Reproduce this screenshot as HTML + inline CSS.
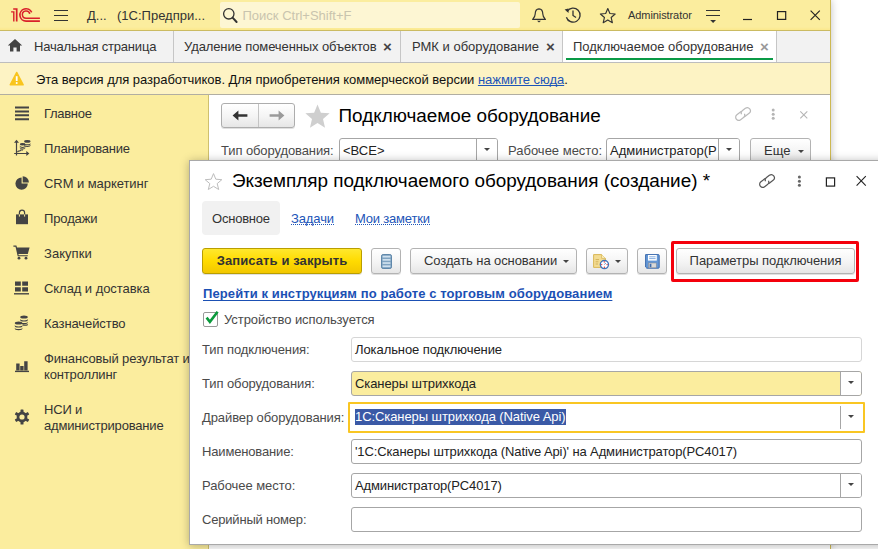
<!DOCTYPE html>
<html lang="ru">
<head>
<meta charset="utf-8">
<title>1С:Предприятие</title>
<style>
*{box-sizing:border-box;margin:0;padding:0}
html,body{width:878px;height:549px;overflow:hidden;background:#fff}
body{font-family:"Liberation Sans",sans-serif;font-size:13px;color:#333;position:relative}
.abs{position:absolute}
.t{position:absolute;white-space:nowrap;line-height:16px}
#win{position:absolute;left:0;top:0;width:831px;height:549px;overflow:hidden;background:#fff;box-shadow:0 0 8px rgba(0,0,0,.25)}
#titlebar{position:absolute;left:0;top:0;width:831px;height:31px;background:linear-gradient(#fbed9e 0,#fbed9e 27px,#fbe88c 30px);border-bottom:1px solid #cbbb62}
#search{position:absolute;left:220px;top:2px;width:300px;height:26px;background:#fdf6d3;border-radius:2px}
#tabs{position:absolute;left:0;top:31px;width:831px;height:31px;background:#f2f2f2;border-right:1px solid #d8c45f}
#tabs .sep{position:absolute;top:0;width:1px;height:31px;background:#c6c6c6}
#tabline{position:absolute;left:0;top:62px;width:831px;height:1px;background:#bdbdbd}
#notify{position:absolute;left:0;top:63px;width:831px;height:31px;background:#fdf3c4;border-right:1px solid #d8c45f}
#notifyline{position:absolute;left:0;top:94px;width:831px;height:1px;background:#b1aea2}
#side{position:absolute;left:0;top:95px;width:208px;height:454px;background:#fbed9e}
#sideline{position:absolute;left:208px;top:95px;width:1px;height:454px;background:#cfc06e}
#content{position:absolute;left:209px;top:95px;width:621px;height:454px;background:#fff}
#winright{position:absolute;left:830px;top:0;width:1px;height:549px;background:#cdb852}
.side-item{position:absolute;left:44px;white-space:nowrap;line-height:16px;font-size:13px;color:#333}
.ico{position:absolute}
a.lnk{color:#1c55b8;text-decoration:underline;text-decoration-skip-ink:none}
.btn{position:absolute;height:25px;border:1px solid #b3b3b3;border-radius:3px;background:linear-gradient(#ffffff,#f4f4f4 55%,#e6e6e6);box-shadow:0 1px 0 rgba(0,0,0,.12);font-size:13px;color:#333;line-height:23px;text-align:center;white-space:nowrap}
.fld{position:absolute;height:25px;border:1px solid #a6a6a6;border-radius:3px;background:#fff;font-size:13px;line-height:23px;color:#222;white-space:nowrap;overflow:hidden;padding-left:3px}
.fld .dd{position:absolute;right:0;top:0;width:21px;height:100%;border-left:1px solid #a6a6a6;background:#fff}
.fld .dd:after{content:"";position:absolute;left:7px;top:9px;border:3px solid transparent;border-top:3px solid #444;border-bottom:0}
#dlg{position:absolute;left:189px;top:160px;width:700px;height:385px;background:#fff;border:1px solid #a9a9a9;box-shadow:0 1px 9px rgba(0,0,0,.28)}
.lbl{position:absolute;white-space:nowrap;font-size:13px;line-height:16px;color:#4a4a4a}
.x{font-size:15px;font-weight:bold;color:#444;line-height:16px}
.car{position:absolute;top:11px;border:3px solid transparent;border-top:3px solid #444;border-bottom:0}
.dl{color:#1c55b8;border-bottom:1px dotted #1c55b8;line-height:11px}
.btn.y{background:linear-gradient(#ffe82e,#ffdb00 50%,#f2c700);border-color:#b99e00;font-weight:bold;color:#333}
</style>
</head>
<body>
<div id="win">
  <div id="titlebar">
    <svg class="ico" style="left:10px;top:7px" width="31" height="16" viewBox="0 0 31 16">
      <g fill="none" stroke="#d9202b">
        <path d="M3.2 2 H6.7 V14.6" stroke-width="1.7"/>
        <path d="M1.1 4.9 H3.8 V14.6" stroke-width="1.4"/>
        <path d="M21.67 5.35 A6.15 6.15 0 1 0 16.1 14.1 H29.9" stroke-width="1.6"/>
        <path d="M19.74 6.96 A3.7 3.7 0 1 0 16.1 11.3 H29.9" stroke-width="1.5"/>
      </g>
    </svg>
    <svg class="ico" style="left:54px;top:9px" width="16" height="13" viewBox="0 0 16 13"><g stroke="#333" stroke-width="1.2"><path d="M0 1.5H14M0 6.5H14M0 11.5H14"/></g></svg>
    <div class="t" style="left:87px;top:8px;color:#333">Д...</div>
    <div class="t" style="left:117px;top:8px;color:#333">(1С:Предпри...</div>
    <div id="search"></div>
    <svg class="ico" style="left:222px;top:6px" width="18" height="18" viewBox="0 0 18 18"><circle cx="6.8" cy="7.8" r="5.2" fill="none" stroke="#333" stroke-width="1.3"/><path d="M10.8 11.9 L14.6 16" stroke="#333" stroke-width="2" stroke-linecap="round"/></svg>
    <div class="t" style="left:242.5px;top:8px;color:#c9c4ae">Поиск Ctrl+Shift+F</div>
    <!-- bell -->
    <svg class="ico" style="left:530px;top:7px" width="18" height="17" viewBox="0 0 18 17"><path d="M9 1.8 C6.2 2 5.2 4.4 5.2 7 C5.2 9.6 4 10.8 2.6 12.4 H15.4 C14 10.8 12.8 9.6 12.8 7 C12.8 4.4 11.8 2 9 1.8 Z" fill="none" stroke="#333" stroke-width="1.2" stroke-linejoin="round"/><path d="M7 13.8 H11 L9 15.6 Z" fill="#333"/></svg>
    <!-- history -->
    <svg class="ico" style="left:563px;top:5px" width="20" height="20" viewBox="0 0 20 20"><path d="M4.2 6.4 A7 7 0 1 1 3.4 12.2" fill="none" stroke="#333" stroke-width="1.3"/><path d="M1.6 4.6 L5.4 3.6 L5.6 8 Z" fill="#333"/><path d="M10 5.6 V10.4 L13 12.6" fill="none" stroke="#333" stroke-width="1.3"/></svg>
    <!-- star -->
    <svg class="ico" style="left:598.5px;top:6.6px" width="17.6" height="17.6" viewBox="0 0 20 20"><path d="M10 1.8 L12.4 7.4 L18.4 7.9 L13.8 11.9 L15.2 17.8 L10 14.7 L4.8 17.8 L6.2 11.9 L1.6 7.9 L7.6 7.4 Z" fill="none" stroke="#333" stroke-width="1.3" stroke-linejoin="round"/></svg>
    <div class="t" style="left:628px;top:8px;font-size:11px;color:#333;line-height:14px;letter-spacing:-0.08px">Administrator</div>
    <!-- filter menu -->
    <svg class="ico" style="left:706px;top:8px" width="16" height="16" viewBox="0 0 16 16"><path d="M0 2.5H14M0 7.5H14" stroke="#333" stroke-width="1.2"/><path d="M4.2 12 H10 L7.1 14.9 Z" fill="#333"/></svg>
    <!-- window controls -->
    <svg class="ico" style="left:742px;top:8px" width="12" height="14" viewBox="0 0 12 14"><path d="M1 11.5H10" stroke="#222" stroke-width="1.2"/></svg>
    <svg class="ico" style="left:776px;top:9px" width="12" height="12" viewBox="0 0 12 12"><rect x="1.5" y="2.6" width="8.2" height="7.8" fill="none" stroke="#222" stroke-width="1.2"/></svg>
    <svg class="ico" style="left:808px;top:8px" width="14" height="14" viewBox="0 0 14 14"><path d="M2.6 2.6 L11.8 11.8 M11.8 2.6 L2.6 11.8" stroke="#222" stroke-width="1.15"/></svg>
  </div>
  <div id="tabs">
    <svg class="ico" style="left:7px;top:7px" width="16" height="15" viewBox="0 0 16 15"><path d="M8 1 L15.2 7.6 H13 V13.6 H9.6 V9.4 H6.4 V13.6 H3 V7.6 H0.8 Z" fill="#444"/></svg>
    <div class="t" style="left:34px;top:8px;color:#333;letter-spacing:-0.2px">Начальная страница</div>
    <div class="sep" style="left:173px"></div>
    <div class="t" style="left:184px;top:8px;color:#333;letter-spacing:-0.1px">Удаление помеченных объектов</div>
    <div class="t x" style="left:383px;top:8px">×</div>
    <div class="sep" style="left:400px"></div>
    <div class="t" style="left:412px;top:8px;color:#333">РМК и оборудование</div>
    <div class="t x" style="left:546px;top:8px">×</div>
    <div class="sep" style="left:562px"></div>
    <div class="abs" style="left:563px;top:0;width:213px;height:32px;background:#fff"></div>
    <div class="abs" style="left:566px;top:27px;width:207px;height:2px;background:#0a9a46"></div>
    <div class="t" style="left:573px;top:8px;color:#333">Подключаемое оборудование</div>
    <div class="t x" style="left:760px;top:8px;color:#999">×</div>
    <div class="sep" style="left:776px"></div>
  </div>
  <div id="tabline"></div>
  <div id="notify">
    <svg class="ico" style="left:9px;top:8px" width="16" height="15" viewBox="0 0 16 15"><path d="M7.7 1.4 L14.2 13.8 H1.2 Z" fill="#f9c51d" stroke="#f9c51d" stroke-width="1.4" stroke-linejoin="round"/><path d="M7.7 5.2 V10" stroke="#fff" stroke-width="1.8"/><circle cx="7.7" cy="12" r="1" fill="#fff"/></svg>
    <div class="t" style="left:36px;top:9px;color:#111;letter-spacing:-0.04px">Эта версия для разработчиков. Для приобретения коммерческой версии <a class="lnk">нажмите сюда</a>.</div>
  </div>
  <div id="notifyline"></div>
  <div id="side">
    <!-- y offsets relative to side top (95) -->
    <svg class="ico" style="left:15px;top:11px" width="14" height="15" viewBox="0 0 14 15"><path d="M0 1.5H14M0 5.4H14M0 9.3H14M0 13.2H14" stroke="#444" stroke-width="2"/></svg>
    <div class="side-item" style="top:11px;letter-spacing:-0.3px">Главное</div>

    <svg class="ico" style="left:13px;top:43px" width="18" height="19" viewBox="0 0 18 19"><g stroke="#444" fill="none"><path d="M3.5 3.5 V17.6 M1.2 15.5 H14.5" stroke-width="1.2"/><path d="M4.4 14 L5.6 13 H6.8 L7.8 12 H10" stroke-width="1.2"/></g><g fill="#444"><path d="M3.5 1.8 L1 4.8 H6 Z M16.4 15.5 L13.3 13 V18 Z"/><ellipse cx="9.6" cy="6.3" rx="2.8" ry="1.3"/><path d="M6.80 7.6 A2.8 1.3 0 0 0 12.40 7.6 V8.60 A2.8 1.3 0 0 1 6.80 8.60 Z"/><path d="M6.80 9.3 A2.8 1.3 0 0 0 12.40 9.3 V10.10 A2.8 1.3 0 0 1 6.80 10.10 Z"/><ellipse cx="14.3" cy="3.4" rx="3.2" ry="1.4"/><path d="M11.10 4.9 A3.2 1.4 0 0 0 17.50 4.9 V5.90 A3.2 1.4 0 0 1 11.10 5.90 Z"/><path d="M11.10 6.6 A3.2 1.4 0 0 0 17.50 6.6 V7.60 A3.2 1.4 0 0 1 11.10 7.60 Z"/></g></svg>
    <div class="side-item" style="top:46px;letter-spacing:-0.26px">Планирование</div>

    <svg class="ico" style="left:15px;top:81px" width="15" height="15" viewBox="0 0 15 15"><path d="M6.6 1.4 A6.2 6.2 0 1 0 12.8 7.6 H6.6 Z" fill="#444"/><path d="M7.7 0.3 A6.2 6.2 0 0 1 13.9 6.5 H7.7 Z" fill="#444"/></svg>
    <div class="side-item" style="top:81px;letter-spacing:-0.06px">CRM и маркетинг</div>

    <svg class="ico" style="left:15px;top:114px" width="14" height="16" viewBox="0 0 14 16"><path d="M1 5.4 H13 V15.2 H1 Z" fill="#444"/><path d="M4.4 7.2 V3.8 A2.6 2.6 0 0 1 9.6 3.8 V7.2" fill="none" stroke="#444" stroke-width="1.2"/><path d="M4.4 7.6 V5.4 M9.6 7.6 V5.4" stroke="#fbed9e" stroke-width="1"/></svg>
    <div class="side-item" style="top:116px;letter-spacing:-0.13px">Продажи</div>

    <svg class="ico" style="left:13px;top:150px" width="17" height="15" viewBox="0 0 17 15"><path d="M0.4 0.6 H3.4 L4 2.4 H16.6 L14.8 9 H5.4 L5.7 10.2 H14.8 V11.3 H4.7 L2.5 1.7 H0.4 Z" fill="#444"/><circle cx="6" cy="13.2" r="1.4" fill="#444"/><circle cx="13" cy="13.2" r="1.4" fill="#444"/></svg>
    <div class="side-item" style="top:151px;letter-spacing:0.05px">Закупки</div>

    <svg class="ico" style="left:14px;top:186px" width="15" height="15" viewBox="0 0 15 15"><path d="M1 0.4 H6.8 V4.8 H1 Z M8.2 0.4 H14 V4.8 H8.2 Z M1 6.2 H6.8 V10.6 H1 Z M8.2 6.2 H14 V10.6 H8.2 Z" fill="#444"/><path d="M0 12.8 H15" stroke="#444" stroke-width="1.4"/></svg>
    <div class="side-item" style="top:186px;letter-spacing:-0.06px">Склад и доставка</div>

    <svg class="ico" style="left:14px;top:220px" width="15" height="16" viewBox="0 0 15 16"><g fill="#444"><ellipse cx="10" cy="2" rx="3.8" ry="1.6"/><path d="M6.2 3.8 A3.8 1.6 0 0 0 13.800000000000001 3.8 V5 A3.8 1.6 0 0 1 6.2 5 Z"/><path d="M6.2 6.4 A3.8 1.6 0 0 0 13.8 6.4 V7.6 A3.8 1.6 0 0 1 6.2 7.6 Z"/><path d="M8.6 9 A3.8 1.6 0 0 0 13.8 9 V10.200000000000001 A3.8 1.6 0 0 1 8.6 10.4 Z"/><ellipse cx="4.6" cy="8" rx="3.8" ry="1.6"/><path d="M0.8 9.8 A3.8 1.6 0 0 0 8.4 9.8 V11 A3.8 1.6 0 0 1 0.8 11 Z"/><path d="M0.8 12.4 A3.8 1.6 0 0 0 8.4 12.4 V13.6 A3.8 1.6 0 0 1 0.8 13.6 Z"/></g></svg>
    <div class="side-item" style="top:221px;letter-spacing:-0.08px">Казначейство</div>

    <svg class="ico" style="left:15px;top:264px" width="14" height="14" viewBox="0 0 14 14"><path d="M1.2 4.6 H4.6 V11.6 H1.2 Z M5.2 7 H8.6 V11.6 H5.2 Z M9.2 2.2 H12.6 V11.6 H9.2 Z" fill="#444"/><path d="M0 12.4 H14" stroke="#444" stroke-width="1.4"/></svg>
    <div class="side-item" style="top:256px;letter-spacing:-0.15px">Финансовый результат и<br>контроллинг</div>

    <svg class="ico" style="left:14px;top:314px" width="16" height="16" viewBox="0 0 16 16"><g fill="#444"><circle cx="8" cy="8" r="5.4"/><g id="tth"><rect x="6.5" y="0.4" width="3" height="15.2" rx="0.6"/></g><rect x="6.5" y="0.4" width="3" height="15.2" rx="0.6" transform="rotate(60 8 8)"/><rect x="6.5" y="0.4" width="3" height="15.2" rx="0.6" transform="rotate(120 8 8)"/></g><circle cx="8" cy="8" r="2.6" fill="#fbed9e"/></svg>
    <div class="side-item" style="top:307px;letter-spacing:-0.18px">НСИ и<br>администрирование</div>
  </div>
  <div id="sideline"></div>
  <div id="content">
    <!-- coordinates relative to content (209,95) -->
    <div class="btn" style="left:12px;top:8px;width:74px;height:25px;border-color:#adadad"></div>
    <div class="abs" style="left:49px;top:9px;width:1px;height:23px;background:#c4c4c4"></div>
    <svg class="ico" style="left:23px;top:15px" width="16" height="11" viewBox="0 0 16 11"><path d="M0.6 5.5 L6.4 0.6 V4.2 H15.4 V6.8 H6.4 V10.4 Z" fill="#333"/></svg>
    <svg class="ico" style="left:60px;top:15px" width="16" height="11" viewBox="0 0 16 11"><path d="M15.4 5.5 L9.6 0.6 V4.2 H0.6 V6.8 H9.6 V10.4 Z" fill="#9a9a9a"/></svg>
    <svg class="ico" style="left:95px;top:8px" width="27" height="27" viewBox="0 0 24 24"><path d="M12 1.4 L15 8.6 L22.8 9.2 L16.9 14.3 L18.7 21.9 L12 17.8 L5.3 21.9 L7.1 14.3 L1.2 9.2 L9 8.6 Z" fill="#cfcfcf"/></svg>
    <div class="t" style="left:129.5px;top:9.5px;font-size:18.9px;line-height:22px;color:#000">Подключаемое оборудование</div>
    <!-- link icon -->
    <svg class="ico" style="left:525px;top:10px" width="18" height="18" viewBox="0 0 18 18"><g fill="none" stroke="#b9b9b9" stroke-width="1.2" transform="rotate(-37 9 9)"><path d="M8.9 5.9 H3.7 A3.1 3.1 0 0 0 3.7 12.1 H7.3 A3.1 3.1 0 0 0 10.4 9.6"/><path d="M9.1 12.1 H14.3 A3.1 3.1 0 0 0 14.3 5.9 H10.7 A3.1 3.1 0 0 0 7.6 8.4"/></g></svg>
    <svg class="ico" style="left:561px;top:13px" width="6" height="13" viewBox="0 0 6 13"><g fill="#b5b5b5"><circle cx="3.2" cy="2.1" r="1.5"/><circle cx="3.2" cy="6.2" r="1.5"/><circle cx="3.2" cy="10.2" r="1.5"/></g></svg>
    <svg class="ico" style="left:590px;top:15px" width="10" height="10" viewBox="0 0 10 10"><path d="M1.3 1.3 L8.3 8.3 M8.3 1.3 L1.3 8.3" stroke="#b5b5b5" stroke-width="1.1"/></svg>

    <div class="lbl" style="left:12px;top:48px;letter-spacing:-0.1px">Тип оборудования:</div>
    <div class="fld" style="left:130px;top:43px;width:159px">&lt;ВСЕ&gt;<span class="dd"></span></div>
    <div class="lbl" style="left:299px;top:48px">Рабочее место:</div>
    <div class="fld" style="left:397px;top:43px;width:134px">Администратор(Р<span class="dd"></span></div>
    <div class="btn" style="left:541px;top:43px;width:61px;text-align:left;padding-left:13px">Еще<span class="car" style="left:47px"></span></div>
  </div>
  <div id="winright"></div>
</div>
<div id="dlg">
  <!-- coords relative to dlg inner (190,161) -->
  <svg class="ico" style="left:14px;top:11px" width="19" height="19" viewBox="0 0 19 19"><path d="M9.5 1.6 L11.8 7.2 L17.8 7.7 L13.2 11.6 L14.7 17.5 L9.5 14.3 L4.3 17.5 L5.800000000000001 11.6 L1.2 7.7 L7.2 7.2 Z" fill="none" stroke="#bdbdbd" stroke-width="1" stroke-linejoin="round"/></svg>
  <div class="t" style="left:42px;top:9px;font-size:18.9px;line-height:22px;color:#000">Экземпляр подключаемого оборудования (создание) *</div>
  <svg class="ico" style="left:568px;top:11px" width="18" height="18" viewBox="0 0 18 18"><g fill="none" stroke="#555" stroke-width="1.2" transform="rotate(-37 9 9)"><path d="M8.9 5.9 H3.7 A3.1 3.1 0 0 0 3.7 12.1 H7.3 A3.1 3.1 0 0 0 10.4 9.6"/><path d="M9.1 12.1 H14.3 A3.1 3.1 0 0 0 14.3 5.9 H10.7 A3.1 3.1 0 0 0 7.6 8.4"/></g></svg>
  <svg class="ico" style="left:606px;top:14px" width="6" height="13" viewBox="0 0 6 13"><g fill="#666"><circle cx="3.4" cy="2.1" r="1.5"/><circle cx="3.4" cy="6.2" r="1.5"/><circle cx="3.4" cy="10.2" r="1.5"/></g></svg>
  <svg class="ico" style="left:635px;top:15px" width="11" height="11" viewBox="0 0 11 11"><rect x="1.4" y="1.9" width="8.2" height="8.2" fill="none" stroke="#222" stroke-width="1.2"/></svg>
  <svg class="ico" style="left:665px;top:14px" width="13" height="13" viewBox="0 0 13 13"><path d="M1.6 1.2 L10.8 10.6 M10.8 1.2 L1.6 10.6" stroke="#222" stroke-width="1.1"/></svg>

  <div class="abs" style="left:12px;top:40px;width:78px;height:34px;background:#f1f1f1;border-radius:4px"></div>
  <div class="t" style="left:22px;top:50px;color:#333;letter-spacing:-0.22px">Основное</div>
  <div class="t dl" style="left:101px;top:52px;letter-spacing:-0.12px">Задачи</div>
  <div class="t dl" style="left:165px;top:52px;letter-spacing:-0.2px">Мои заметки</div>

  <div class="btn y" style="left:12px;top:87px;height:26px;line-height:24px;width:160px;letter-spacing:0.1px">Записать и закрыть</div>
  <div class="btn" style="left:181px;top:87px;height:26px;line-height:24px;width:30px"><svg class="ico" style="left:9px;top:5px" width="12" height="15" viewBox="0 0 12 15"><rect x="0.5" y="0.5" width="10" height="14" rx="1.6" fill="#7fa3c1" stroke="#5f87aa" stroke-width="1"/><g fill="#cfe0ee"><rect x="1.6" y="1.8" width="7.8" height="1.7"/><rect x="1.6" y="5" width="7.8" height="1.7"/><rect x="1.6" y="8.2" width="7.8" height="1.7"/><rect x="1.6" y="11.4" width="7.8" height="1.7"/></g></svg></div>
  <div class="btn" style="left:220px;top:87px;height:26px;line-height:24px;width:167px;text-align:left;padding-left:13px;letter-spacing:-0.09px">Создать на основании<span class="car" style="left:152px"></span></div>
  <div class="btn" style="left:396px;top:87px;height:26px;line-height:24px;width:42px"><svg class="ico" style="left:6px;top:5px" width="17" height="16" viewBox="0 0 17 16"><path d="M0.6 0.6 H8.6 L12.4 4.4 V13.4 H0.6 Z" fill="#f3dc93" stroke="#d9b857" stroke-width="1"/><path d="M8.6 0.6 V4.4 H12.4" fill="#fbf0c4" stroke="#d9b857" stroke-width="0.8"/><path d="M2.6 5.6 H6 M2.6 7.8 H5.4 M2.6 10 H5" stroke="#cfae55" stroke-width="0.9"/><circle cx="11.4" cy="10.6" r="4.1" fill="#fff" stroke="#3f73b8" stroke-width="1.3"/><g fill="#e03030"><circle cx="11.4" cy="7.9" r="0.7"/><circle cx="14.1" cy="10.6" r="0.7"/><circle cx="11.4" cy="13.3" r="0.7"/><circle cx="8.7" cy="10.6" r="0.7"/></g><path d="M11.4 10.6 L12.8 9" stroke="#3f73b8" stroke-width="0.8"/></svg><span class="car" style="left:28px"></span></div>
  <div class="btn" style="left:447px;top:87px;height:26px;line-height:24px;width:30px"><svg class="ico" style="left:7px;top:5px" width="15" height="15" viewBox="0 0 15 15"><path d="M0.6 0.6 H13.4 A0.8 0.8 0 0 1 14.2 1.4 V13.4 A0.8 0.8 0 0 1 13.4 14.2 H1.8 L0.6 13 Z" fill="#6497d6" stroke="#3d6cae" stroke-width="1"/><rect x="3" y="1" width="8.8" height="5.6" fill="#fff"/><path d="M4.2 2.8 H10.6 M4.2 4.6 H10.6" stroke="#6497d6" stroke-width="0.8"/><rect x="3.6" y="9" width="7.6" height="4.8" fill="#d9d9d9" stroke="#8a8a8a" stroke-width="0.5"/><rect x="4.6" y="9.8" width="1.8" height="3.4" fill="#3d6cae"/></svg></div>
  <div class="btn" style="left:486px;top:87px;height:26px;line-height:24px;width:179px;letter-spacing:-0.05px">Параметры подключения</div>
  <div class="abs" style="left:481px;top:80px;width:188px;height:41px;border:3px solid #f4000c;border-radius:2px"></div>

  <div class="t" style="left:13px;top:125px;font-weight:bold;color:#1b50b4;text-decoration:underline;text-decoration-skip-ink:none;text-underline-offset:1.5px;letter-spacing:0.1px">Перейти к инструкциям по работе с торговым оборудованием</div>

  <div class="abs" style="left:13px;top:151px;width:15px;height:15px;border:1px solid #999;border-radius:2px;background:#fff"></div>
  <svg class="ico" style="left:14px;top:149px" width="16" height="16" viewBox="0 0 16 16"><path d="M2.6 7.6 L5.9 11.8 L13.6 1.8" fill="none" stroke="#0b9a3c" stroke-width="2.6"/></svg>
  <div class="lbl" style="left:34px;top:151px;letter-spacing:-0.065px">Устройство используется</div>

  <div class="lbl" style="left:12px;top:181px;letter-spacing:-0.08px">Тип подключения:</div>
  <div class="fld" style="left:161px;top:176px;width:511px;border-color:#d6d6d6;letter-spacing:-0.08px">Локальное подключение</div>

  <div class="lbl" style="left:12px;top:215px;letter-spacing:-0.09px">Тип оборудования:</div>
  <div class="fld" style="left:161px;top:210px;width:511px;background:#fbed9e;letter-spacing:-0.08px">Сканеры штрихкода<span class="dd"></span></div>

  <div class="lbl" style="left:12px;top:249px;letter-spacing:-0.1px">Драйвер оборудования:</div>
  <div class="fld" style="left:158px;top:241px;width:517px;height:31px;border:2px solid #f9c623;border-radius:1px;line-height:26px;padding-left:5px"><span style="background:#3a59a6;color:#fff;display:inline-block;height:16px;line-height:16px;letter-spacing:-0.08px;vertical-align:0px">1С:Сканеры штрихкода (Native Api)</span><span class="dd" style="right:2px;top:2px;height:23px;border-left-color:#a6a6a6"></span></div>

  <div class="lbl" style="left:12px;top:283px;letter-spacing:-0.16px">Наименование:</div>
  <div class="fld" style="left:161px;top:278px;width:511px;letter-spacing:-0.12px">'1С:Сканеры штрихкода (Native Api)' на Администратор(PC4017)</div>

  <div class="lbl" style="left:12px;top:317px;letter-spacing:-0.06px">Рабочее место:</div>
  <div class="fld" style="left:161px;top:312px;width:511px;letter-spacing:-0.13px">Администратор(PC4017)<span class="dd"></span></div>

  <div class="lbl" style="left:12px;top:351px;letter-spacing:-0.19px">Серийный номер:</div>
  <div class="fld" style="left:161px;top:346px;width:511px"></div>
</div>
</body>
</html>
